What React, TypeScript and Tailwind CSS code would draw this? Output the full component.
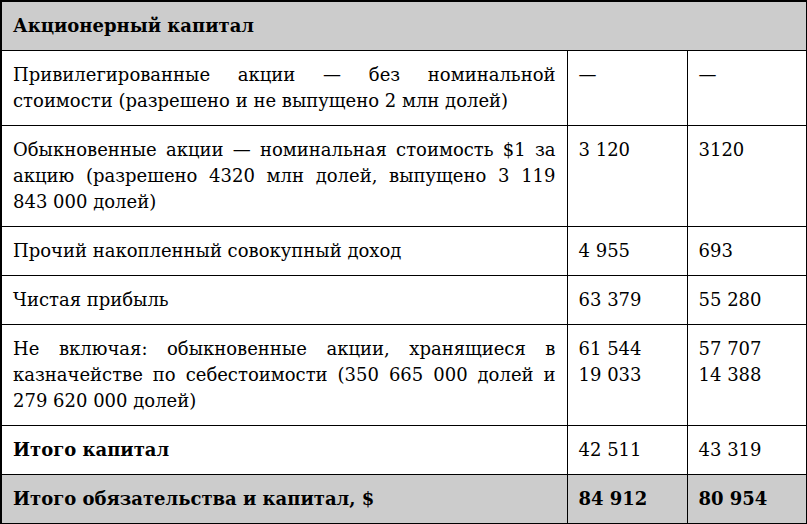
type Row = {
  label: string;
  a: string;
  b: string;
  bold?: "label" | "all";
  shaded?: boolean;
};

const rows: Row[] = [
  {
    label: "Привилегированные акции — без номинальной стоимости (разрешено и не выпущено 2 млн долей)",
    a: "—",
    b: "—",
  },
  {
    label:
      "Обыкновенные акции — номинальная стоимость $1 за акцию (разрешено 4320 млн долей, выпущено 3 119 843\u00a0000 долей)",
    a: "3 120",
    b: "3120",
  },
  { label: "Прочий накопленный совокупный доход", a: "4 955", b: "693" },
  { label: "Чистая прибыль", a: "63 379", b: "55 280" },
  {
    label:
      "Не включая: обыкновенные акции, хранящиеся в казначействе по себестоимости (350 665 000 долей и 279 620 000 долей)",
    a: "61 544\n19 033",
    b: "57 707\n14 388",
  },
  { label: "Итого капитал", a: "42 511", b: "43 319", bold: "label" },
  { label: "Итого обязательства и капитал, $", a: "84 912", b: "80 954", bold: "all", shaded: true },
];

export default function App() {
  return (
    <div className="w-[807px] h-[524px] bg-white text-black font-['DejaVu_Serif',serif] text-[18px] leading-[26px]">
      <table className="w-[806px] border-collapse border-2 border-black table-fixed">
        <colgroup>
          <col className="w-[566px]" />
          <col className="w-[120px]" />
          <col className="w-[120px]" />
        </colgroup>
        <tbody>
          <tr className="bg-[#cccccc]">
            <td colSpan={3} className="border border-black px-[11px] py-[11px] font-bold">
              Акционерный капитал
            </td>
          </tr>
          {rows.map((r) => (
            <tr key={r.label} className={r.shaded ? "bg-[#cccccc]" : ""}>
              <td
                className={`border border-black px-[11px] py-[11px] align-top text-justify ${
                  r.bold ? "font-bold" : ""
                }`}
              >
                {r.label}
              </td>
              <td
                className={`border border-black px-[11px] py-[11px] align-top whitespace-pre-line ${
                  r.bold === "all" ? "font-bold" : ""
                }`}
              >
                {r.a}
              </td>
              <td
                className={`border border-black px-[11px] py-[11px] align-top whitespace-pre-line ${
                  r.bold === "all" ? "font-bold" : ""
                }`}
              >
                {r.b}
              </td>
            </tr>
          ))}
        </tbody>
      </table>
    </div>
  );
}
